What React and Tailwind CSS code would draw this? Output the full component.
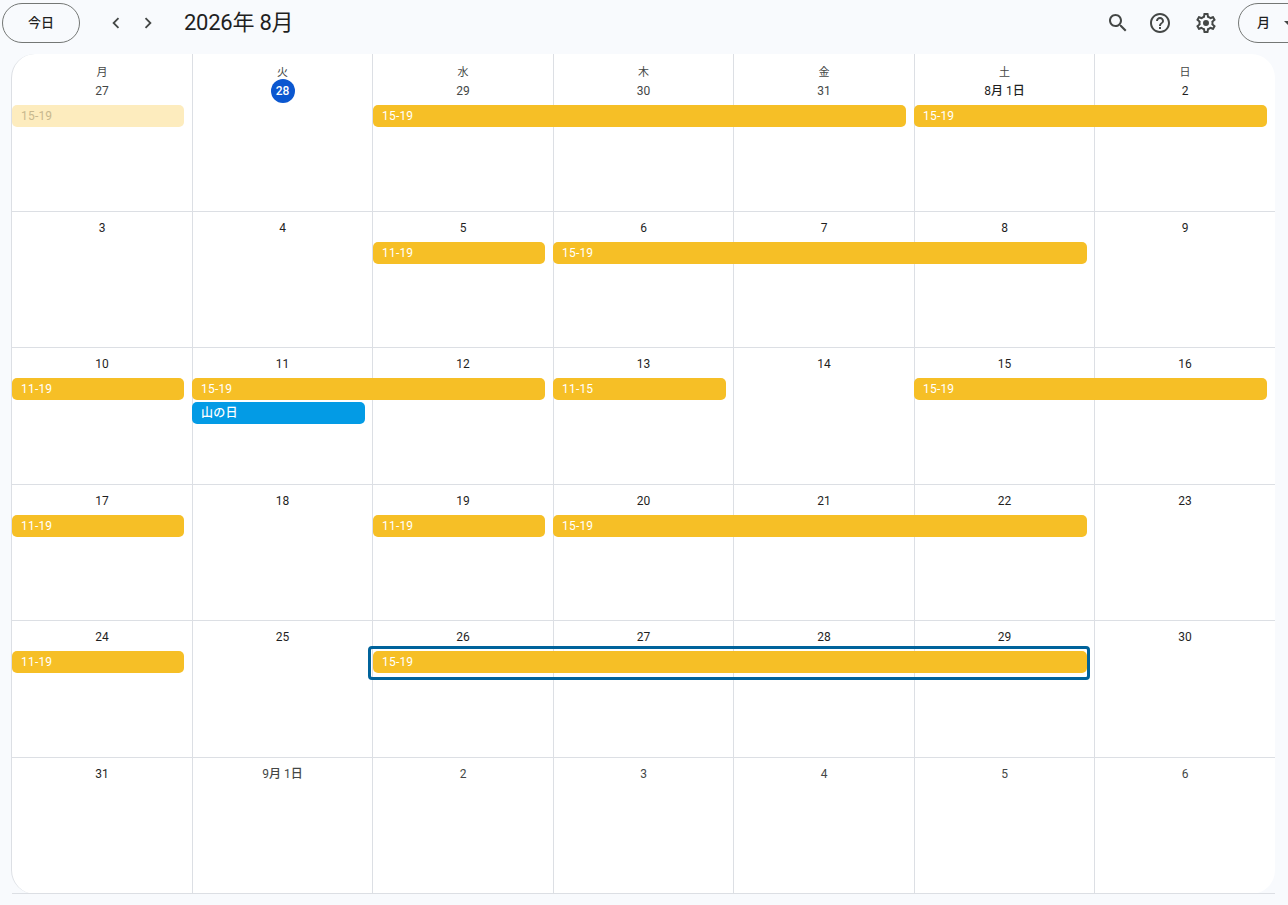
import React from 'react';

const fontStack = 'font-["Roboto","Noto_Sans_CJK_JP",sans-serif]';

const weekDays = ['月', '火', '水', '木', '金', '土', '日'];

const columnStarts = ['col-start-1', 'col-start-2', 'col-start-3', 'col-start-4', 'col-start-5', 'col-start-6', 'col-start-7'];

const weeks = [
    {
        days: [
            { label: '27', muted: true },
            { label: '28', today: true },
            { label: '29', muted: true },
            { label: '30', muted: true },
            { label: '31', muted: true },
            { label: '8月 1日' },
            { label: '2' },
        ],
        events: [
            { text: '15-19', pos: 'col-start-1 col-span-1 mr-2', faded: true },
            { text: '15-19', pos: 'col-start-3 col-span-3 ml-px mr-2' },
            { text: '15-19', pos: 'col-start-6 col-span-2 mr-2' },
        ],
    },
    {
        days: ['3', '4', '5', '6', '7', '8', '9'].map((label) => ({ label })),
        events: [
            { text: '11-19', pos: 'col-start-3 col-span-1 ml-px mr-2' },
            { text: '15-19', pos: 'col-start-4 col-span-3 mr-[7px]' },
        ],
    },
    {
        days: ['10', '11', '12', '13', '14', '15', '16'].map((label) => ({ label })),
        events: [
            { text: '11-19', pos: 'col-start-1 col-span-1 mr-2' },
            { text: '15-19', pos: 'col-start-2 col-span-2 mr-2' },
            { text: '11-15', pos: 'col-start-4 col-span-1 mr-[7px]' },
            { text: '15-19', pos: 'col-start-6 col-span-2 mr-2' },
            { text: '山の日', pos: 'col-start-2 col-span-1 mr-[7px]', holiday: true },
        ],
    },
    {
        days: ['17', '18', '19', '20', '21', '22', '23'].map((label) => ({ label })),
        events: [
            { text: '11-19', pos: 'col-start-1 col-span-1 mr-2' },
            { text: '11-19', pos: 'col-start-3 col-span-1 ml-px mr-2' },
            { text: '15-19', pos: 'col-start-4 col-span-3 mr-[7px]' },
        ],
    },
    {
        days: ['24', '25', '26', '27', '28', '29', '30'].map((label) => ({ label })),
        events: [
            { text: '11-19', pos: 'col-start-1 col-span-1 mr-2' },
            { text: '15-19', pos: 'col-start-3 col-span-4 ml-px mr-[7px]', selected: true },
        ],
    },
    {
        days: [
            { label: '31' },
            { label: '9月 1日', muted: true },
            { label: '2', muted: true },
            { label: '3', muted: true },
            { label: '4', muted: true },
            { label: '5', muted: true },
            { label: '6', muted: true },
        ],
        events: [],
    },
];

const Icon = ({ d, className }) => (
    <svg viewBox="0 0 24 24" className={className} fill="currentColor">
        <path d={d} />
    </svg>
);

const icons = {
    left: 'M15.41 7.41 14 6l-6 6 6 6 1.41-1.41L10.83 12z',
    right: 'M8.59 16.59 10 18l6-6-6-6-1.41 1.41L13.17 12z',
    search: 'M15.5 14h-.79l-.28-.27C15.41 12.59 16 11.11 16 9.5 16 5.91 13.09 3 9.5 3S3 5.91 3 9.5 5.91 16 9.5 16c1.61 0 3.09-.59 4.23-1.57l.27.28v.79l5 4.99L20.49 19l-4.99-5zm-6 0C7.01 14 5 11.99 5 9.5S7.01 5 9.5 5 14 7.01 14 9.5 11.99 14 9.5 14z',
    help: 'M11 18h2v-2h-2v2zm1-16C6.48 2 2 6.48 2 12s4.48 10 10 10 10-4.48 10-10S17.52 2 12 2zm0 18c-4.41 0-8-3.59-8-8s3.59-8 8-8 8 3.59 8 8-3.59 8-8 8zm0-14c-2.21 0-4 1.79-4 4h2c0-1.1.9-2 2-2s2 .9 2 2c0 2-3 1.75-3 5h2c0-2.25 3-2.5 3-5 0-2.21-1.79-4-4-4z',
    gear: 'M19.43 12.98c.04-.32.07-.64.07-.98 0-.34-.03-.66-.07-.98l2.11-1.65c.19-.15.24-.42.12-.64l-2-3.46c-.09-.16-.26-.25-.44-.25-.06 0-.12.01-.17.03l-2.49 1c-.52-.4-1.08-.73-1.69-.98l-.38-2.65C14.46 2.18 14.25 2 14 2h-4c-.25 0-.46.18-.49.42l-.38 2.65c-.61.25-1.17.59-1.69.98l-2.49-1c-.06-.02-.12-.03-.18-.03-.17 0-.34.09-.43.25l-2 3.46c-.13.22-.07.49.12.64l2.11 1.65c-.04.32-.07.65-.07.98 0 .33.03.66.07.98l-2.11 1.65c-.19.15-.24.42-.12.64l2 3.46c.09.16.26.25.44.25.06 0 .12-.01.17-.03l2.49-1c.52.4 1.08.73 1.69.98l.38 2.65c.03.24.24.42.49.42h4c.25 0 .46-.18.49-.42l.38-2.65c.61-.25 1.17-.59 1.69-.98l2.49 1c.06.02.12.03.18.03.17 0 .34-.09.43-.25l2-3.46c.12-.22.07-.49-.12-.64l-2.11-1.65zm-1.98-1.71c.04.31.05.52.05.73 0 .21-.02.43-.05.73l-.14 1.13.89.7 1.08.84-.7 1.21-1.27-.51-1.04-.42-.9.68c-.43.32-.84.56-1.25.73l-1.06.43-.16 1.13-.2 1.35h-1.4l-.19-1.35-.16-1.13-1.06-.43c-.43-.18-.83-.41-1.23-.71l-.91-.7-1.06.43-1.27.51-.7-1.21 1.08-.84.89-.7-.14-1.13c-.03-.31-.05-.54-.05-.74s.02-.43.05-.73l.14-1.13-.89-.7-1.08-.84.7-1.21 1.27.51 1.04.42.9-.68c.43-.32.84-.56 1.25-.73l1.06-.43.16-1.13.2-1.35h1.39l.19 1.35.16 1.13 1.06.43c.43.18.83.41 1.23.71l.91.7 1.06-.43 1.27-.51.7 1.21-1.07.85-.89.7.14 1.13zM12 9a3 3 0 1 0 0 6 3 3 0 0 0 0-6z',
    drop: 'm7 10 5 5 5-5z',
};

const Header = () => (
    <header className="h-[54px] flex-none flex items-center pb-2 pl-[2px]">
        <button className="w-[78px] h-10 flex-none rounded-full border border-[#747775] text-[13px] font-medium text-[#1f1f1f]">
            今日
        </button>
        <div className="flex ml-5">
            <button className="w-8 h-8 flex items-center justify-center text-[#444746]">
                <Icon d={icons.left} className="w-[22px] h-[22px]" />
            </button>
            <button className="w-8 h-8 flex items-center justify-center text-[#444746]">
                <Icon d={icons.right} className="w-[22px] h-[22px]" />
            </button>
        </div>
        <h1 className="ml-5 text-[22px] leading-7 font-normal tracking-[-0.25px] text-[#1f1f1f]">2026年 8月</h1>
        <div className="flex-1" />
        <div className="flex items-center gap-[18px] text-[#444746]">
            <Icon d={icons.search} className="w-6 h-6" />
            <Icon d={icons.help} className="w-6 h-6" />
            <Icon d={icons.gear} className="w-6 h-6 ml-[4px]" />
        </div>
        <button className="ml-5 w-[92px] h-10 flex-none flex items-center rounded-full border border-[#747775] pl-[18px] mr-[-42px] text-[13px] font-medium text-[#1f1f1f]">
            月
            <Icon d={icons.drop} className="w-6 h-6 ml-[7px] text-[#444746]" />
        </button>
    </header>
);

const EventBar = ({ event }) => {
    let color = 'bg-[#f6bf26] text-white';
    if (event.faded) color = 'bg-[#fdecbe] text-[#c8b88e]';
    if (event.holiday) color = 'bg-[#039be5] text-white';

    return (
        <div className={`${event.pos} ${event.holiday ? 'row-start-3' : 'row-start-2'} relative z-10 h-[22px] rounded-[5px] pl-[9px] text-xs leading-[22px] font-[450] tracking-[0.2px] ${color}`}>
            {event.text}
            {event.selected && (
                <span className="absolute -left-[5px] -top-[5px] -right-[3px] -bottom-[7px] rounded-[4px] border-[3px] border-[#00639b]" />
            )}
        </div>
    );
};

const Week = ({ week, index }) => {
    const first = index === 0;
    return (
        <div className={`grid grid-cols-[180px_180px_181px_180px_181px_180px_181px] gap-y-[2px] border-b border-[#dcdfe4] ${first ? 'grid-rows-[49px_22px_22px_1fr]' : 'grid-rows-[28px_22px_22px_1fr]'}`}>
            {week.days.map((day, i) => (
                <div
                    key={i}
                    className={`${columnStarts[i]} row-start-1 row-span-4 flex flex-col items-center text-center ${i > 0 ? 'border-l border-[#dcdfe4]' : ''} ${first ? 'pt-[11px]' : 'pt-2'}`}
                >
                    {first && <div className="h-4 text-[11px] leading-4 text-[#444746]">{weekDays[i]}</div>}
                    {day.today ? (
                        <div className="w-6 h-6 -mt-[2px] rounded-full bg-[#0b57d0] text-white text-xs leading-6 font-medium">{day.label}</div>
                    ) : (
                        <div className={`text-xs font-[450] ${first ? 'h-6 -mt-[2px] leading-6' : 'h-4 leading-4'} ${day.muted ? 'text-[#444746]' : 'text-[#1f1f1f]'}`}>
                            {day.label}
                        </div>
                    )}
                </div>
            ))}
            {week.events.map((event, i) => (
                <EventBar key={i} event={event} />
            ))}
        </div>
    );
};

const App = () => {
    return (
        <div className={`w-full h-screen overflow-hidden flex flex-col bg-[#f8fafd] ${fontStack}`}>
            <Header />
            <main className="h-[840px] flex-none ml-[11px] mr-[13px] grid grid-rows-[158px_repeat(5,1fr)] rounded-[24px] bg-white border-l border-[#dcdfe4]">
                {weeks.map((week, index) => (
                    <Week key={index} week={week} index={index} />
                ))}
            </main>
        </div>
    );
};

export default App;
